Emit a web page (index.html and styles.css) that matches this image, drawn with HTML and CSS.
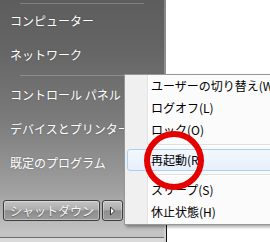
FILE: index.html
```html
<!DOCTYPE html>
<html lang="ja">
<head>
<meta charset="utf-8">
<link rel="stylesheet" href="styles.css">
</head>
<body>
<div class="panel">
  <div class="sep sep-top"></div>
  <div class="item">コンピューター</div>
  <div class="item">ネットワーク</div>
  <div class="sep sep-mid"></div>
  <div class="item">コントロール パネル</div>
  <div class="item">デバイスとプリンター</div>
  <div class="item">既定のプログラム</div>
  <div class="shutdown-row">
    <div class="btn">シャットダウン</div>
    <div class="btn arrow"><svg width="7" height="10" viewBox="0 0 7 10"><polygon points="1.5,1 5.5,5 1.5,9" fill="#fff" stroke="#333" stroke-width="1"/></svg></div>
  </div>
  <div class="panel-foot"></div>
</div>
<div class="right">
  <div class="right-foot"></div>
</div>
<div class="menu">
  <div class="mi">ユーザーの切り替え(W)</div>
  <div class="mi">ログオフ(L)</div>
  <div class="mi">ロック(O)</div>
  <div class="msep"></div>
  <div class="mi hot">再起動(R)</div>
  <div class="msep"></div>
  <div class="mi">スリープ(S)</div>
  <div class="mi">休止状態(H)</div>
</div>
<div class="ring"></div>
</body>
</html>
```
FILE: styles.css
```css
html, body {
  margin: 0;
  padding: 0;
}
body {
  width: 270px;
  height: 242px;
  overflow: hidden;
  display: flex;
  position: relative;
  font-family: "Noto Sans CJK JP", "Noto Sans", sans-serif;
  font-size: 12px;
}
.panel {
  box-sizing: border-box;
  width: 166px;
  height: 242px;
  flex: none;
  border-right: 2px solid rgba(255,255,255,0.25);
  background: linear-gradient(#5d5d5d 0, #656565 50px, #7b7b7b 120px, #a0a0a0 190px, #c3c3c3 232px);
  display: flex;
  flex-direction: column;
}
.sep {
  margin-left: 20px;
  width: 124px;
  height: 0;
  border-top: 1px solid rgba(255,255,255,0.22);
}
.sep-top { margin-top: 3px; }
.sep-mid { margin-top: 3px; margin-bottom: 2px; }
.item {
  height: 34px;
  line-height: 34px;
  padding-left: 10px;
  color: #fff;
  white-space: nowrap;
  text-shadow: 0 0 2px rgba(0,0,0,0.25);
}
.shutdown-row {
  display: flex;
  gap: 2px;
  margin-top: 20px;
  margin-left: 3px;
}
.btn {
  box-sizing: border-box;
  width: 97px;
  height: 21px;
  border: 1px solid #3e3e3e;
  border-radius: 3px;
  box-shadow: inset 0 0 0 1px rgba(255,255,255,0.35);
  background: linear-gradient(#c4c4c4, #adadad 45%, #8d8d8d 52%, #9c9c9c 100%);
  color: #f6f6f6;
  line-height: 19px;
  padding-left: 6px;
  white-space: nowrap;
  text-shadow: 0 1px 1px rgba(0,0,0,0.35);
}
.arrow {
  width: 21px;
  padding-left: 0;
  display: flex;
  align-items: center;
  justify-content: center;
}
.panel-foot {
  margin-top: auto;
  height: 4px;
  border-top: 1px solid #6e6e6e;
  background: #dadada;
}
.right {
  flex: 1;
  background: #fff;
  display: flex;
  flex-direction: column;
}
.right-foot {
  margin-top: auto;
  height: 18px;
  border-left: 1px solid #111;
}
.menu {
  position: absolute;
  left: 124px;
  top: 74px;
  width: 160px;
  border: 1px solid #979797;
  background: linear-gradient(to right, #f0f0f0 0 22px, #e2e3e3 22px 23px, #fff 23px 24px, #fbfbfb 24px);
  box-shadow: 2px 2px 3px rgba(0,0,0,0.35);
  padding-bottom: 1px;
}
.mi {
  height: 22px;
  line-height: 22px;
  padding-left: 26px;
  color: #000;
  white-space: nowrap;
}
.mi.hot {
  box-sizing: border-box;
  margin-left: 2px;
  padding-left: 23px;
  line-height: 20px;
  border: 1px solid #aecff3;
  border-radius: 3px;
  background: linear-gradient(#f3f8fe, #e6effb);
}
.msep {
  height: 3px;
  margin-left: 22px;
  margin-bottom: 4px;
  border-bottom: 1px solid #e0e0e0;
  box-shadow: 0 1px 0 #fff;
}
.ring {
  position: absolute;
  left: 144px;
  top: 131px;
  width: 60px;
  height: 59px;
  box-sizing: border-box;
  border: 6px solid #e50000;
  border-radius: 50%;
}
```
